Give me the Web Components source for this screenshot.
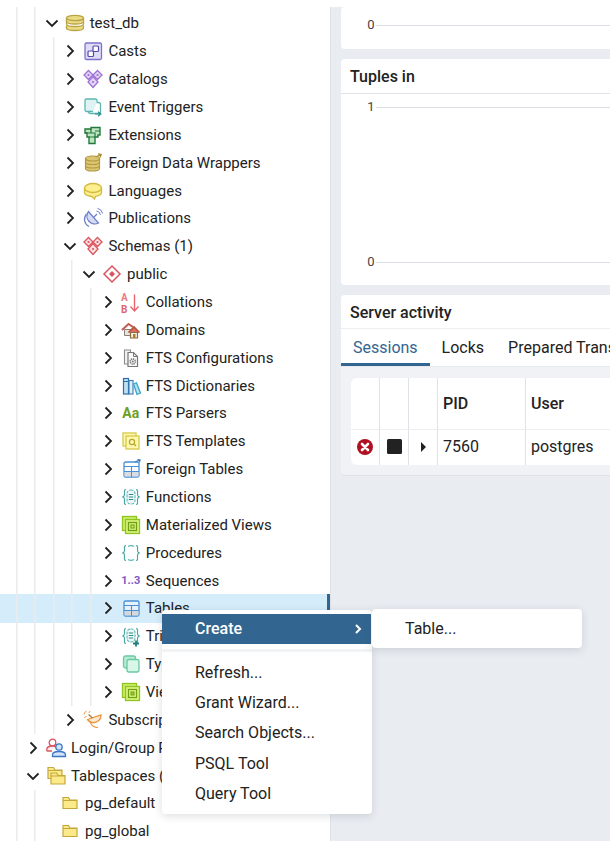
<!DOCTYPE html>
<html>
<head>
<meta charset="utf-8">
<style>
  html, body { margin: 0; padding: 0; height: 100%; background: #fff; overflow: hidden; }
  body { font-family: Roboto, "Liberation Sans", sans-serif; color: #222; }
</style>
</head>
<body>
<pg-app>
  <pg-tree slot="tree">
    <tree-row level="1" state="open" icon="database">test_db</tree-row>
    <tree-row level="2" icon="casts">Casts</tree-row>
    <tree-row level="2" icon="catalogs">Catalogs</tree-row>
    <tree-row level="2" icon="triggers">Event Triggers</tree-row>
    <tree-row level="2" icon="extensions">Extensions</tree-row>
    <tree-row level="2" icon="fdw">Foreign Data Wrappers</tree-row>
    <tree-row level="2" icon="languages">Languages</tree-row>
    <tree-row level="2" icon="publications">Publications</tree-row>
    <tree-row level="2" state="open" icon="schemas">Schemas (1)</tree-row>
    <tree-row level="3" state="open" icon="public">public</tree-row>
    <tree-row level="4" icon="collations">Collations</tree-row>
    <tree-row level="4" icon="domains">Domains</tree-row>
    <tree-row level="4" icon="ftsconf">FTS Configurations</tree-row>
    <tree-row level="4" icon="ftsdict">FTS Dictionaries</tree-row>
    <tree-row level="4" icon="ftsparser">FTS Parsers</tree-row>
    <tree-row level="4" icon="ftstemplate">FTS Templates</tree-row>
    <tree-row level="4" icon="foreign">Foreign Tables</tree-row>
    <tree-row level="4" icon="functions">Functions</tree-row>
    <tree-row level="4" icon="matviews">Materialized Views</tree-row>
    <tree-row level="4" icon="procedures">Procedures</tree-row>
    <tree-row level="4" icon="sequences">Sequences</tree-row>
    <tree-row level="4" icon="tables" selected>Tables</tree-row>
    <tree-row level="4" icon="trigfuncs">Trigger Functions</tree-row>
    <tree-row level="4" icon="types">Types</tree-row>
    <tree-row level="4" icon="views">Views</tree-row>
    <tree-row level="2" icon="subscriptions">Subscriptions</tree-row>
    <tree-row level="0" icon="roles">Login/Group Roles</tree-row>
    <tree-row level="0" state="open" icon="tablespaces">Tablespaces (2)</tree-row>
    <tree-row level="0" state="leaf" guides="2" icon="folder">pg_default</tree-row>
    <tree-row level="0" state="leaf" guides="2" icon="folder">pg_global</tree-row>
  </pg-tree>

  <pg-dash slot="dash">
    <chart-card style="--h:42px;--pad-top:10px;--pad-bottom:0px"><chart-axis>0</chart-axis></chart-card>
    <chart-card style="--h:226px;--pad-top:5px;--pad-bottom:15px" heading="Tuples in">
      <chart-axis>1</chart-axis>
      <chart-axis>0</chart-axis>
    </chart-card>
    <activity-card></activity-card>
  </pg-dash>

  <context-menu slot="overlay"></context-menu>
</pg-app>

<script>
const table = (stroke, fill, head) => `
  <rect x="3" y="3" width="15" height="15" rx="1.5" fill="${fill}" stroke="${stroke}" stroke-width="1.3"/>
  <path d="M3 7.500h15M3 12.500h15M10.500 7.500v10.500" stroke="${stroke}" stroke-width="1.1" fill="none"/>
  <rect x="3.600" y="13" width="6.400" height="4.500" fill="${head}"/><rect x="11" y="13" width="6.400" height="4.500" fill="${head}"/>`;

const gems = (stroke, fill) => `
  <g fill="${fill}" stroke="${stroke}" stroke-width="1.3">
    <path d="M5.500 1.500 10 6 5.500 10.500 1 6Z"/><path d="M14.500 1.500 19 6 14.500 10.500 10 6Z"/><path d="M10 7.500 15 13 10 18.500 5 13Z"/>
  </g>
  <g fill="${stroke}"><circle cx="5.500" cy="6" r="1.100"/><circle cx="14.500" cy="6" r="1.100"/><circle cx="10" cy="13" r="1.100"/></g>`;

const nested = (stroke, fill) => `
  <rect x="2" y="2" width="13" height="13" fill="${fill}" stroke="${stroke}" stroke-width="1.3"/>
  <rect x="5" y="5" width="13" height="13" fill="${fill}" stroke="${stroke}" stroke-width="1.3"/>`;

const braces = (c) => `
  <path d="M5 2.500C3 2.500 3.500 4.500 3.500 7S3.500 9 1.800 10C3.500 11 3.500 11 3.500 13.500S3 17.500 5 17.500" fill="none" stroke="${c}" stroke-width="1.200"/>
  <path d="M15 2.500C17 2.500 16.500 4.500 16.500 7S16.500 9 18.200 10C16.500 11 16.500 11 16.500 13.500S17 17.500 15 17.500" fill="none" stroke="${c}" stroke-width="1.200"/>`;

const cyl = (s, f) => `
  <g fill="${f}" stroke="${s}" stroke-width="1.200">
    <path d="M2.500 13v2.500c0 1.500 3.200 2.500 7 2.500s7-1 7-2.500V13"/>
    <path d="M2.500 9v3.500c0 1.500 3.200 2.500 7 2.500s7-1 7-2.500V9"/>
    <path d="M2.500 5.500V9c0 1.500 3.200 2.500 7 2.500s7-1 7-2.500V5.500"/>
    <ellipse cx="9.500" cy="5.500" rx="7" ry="2.500"/>
  </g>`;

const folder = (x, y) => `<path d="M${x} ${y}v11h14V${y + 2.500}h-7l-1.500-2.500Z" fill="#fbe98a" stroke="#c4a93a" stroke-width="1.200"/><path d="M${x} ${y + 3}h14" stroke="#c4a93a" stroke-width="1"/>`;

const icons = {
  database: `<g fill="#e9dc84" stroke="#b9a345" stroke-width="1.300">
      <path d="M1.500 12.500v2.500c0 1.500 3.500 2.500 8.500 2.500s8.500-1 8.500-2.500v-2.500"/>
      <path d="M1.500 8v3c0 1.500 3.500 2.500 8.500 2.500s8.500-1 8.500-2.500V8" fill="#fff"/>
      <path d="M1.500 5v3.500c0 1.500 3.500 2.500 8.500 2.500s8.500-1 8.500-2.500V5"/>
      <ellipse cx="10" cy="5" rx="8.500" ry="2.700"/></g>`,
  casts: `<rect x="2" y="2" width="16.500" height="16.500" rx="1.500" fill="#dfdcf7" stroke="#7d72c8" stroke-width="1.300"/>
      <rect x="5" y="10" width="5.500" height="5.500" rx="1" fill="#fff" stroke="#554aa8" stroke-width="1.200"/>
      <rect x="10" y="5" width="5.500" height="5.500" rx="1" fill="#fff" stroke="#554aa8" stroke-width="1.200"/>`,
  catalogs: gems('#9d72d6', '#e3d4f5'),
  triggers: `<rect x="5.500" y="5.500" width="12" height="11" rx="2" fill="#fff" stroke="#5cb7b3" stroke-width="1.300"/>
      <path d="M10 14.500H3.500a1.500 1.500 0 0 1-1.500-1.500V3.500A1.500 1.500 0 0 1 3.500 2h9A1.500 1.500 0 0 1 14 3.500V5.500" fill="#dff3f2" stroke="#5cb7b3" stroke-width="1.300"/>
      <path d="M12 17h5M15 14.800l2.800 2.200-2.800 2.200" fill="none" stroke="#2a8f8c" stroke-width="1.200"/>`,
  extensions: `<path d="M2 4h6V2.500h9V10h-2v2h-3v6.500H6V12H4V8H2Z" fill="#bfe6c2" stroke="#24793a" stroke-width="1.400"/>
      <path d="M2 8h10v4M8 4v4M6 12h6M12 6h5" fill="none" stroke="#24793a" stroke-width="1.200"/>`,
  fdw: cyl('#b29a3e', '#dcc676') + `<path d="M12.500 4 18 1.500M15 .8l3.200.6-1.200 3" fill="none" stroke="#a98f36" stroke-width="1.300"/>`,
  languages: `<path d="M1.500 7c0-2.500 3.800-4.500 8.500-4.500s8.500 2 8.500 4.500v4.500c0 1.800-2.500 3.300-6 3.800l-1 2.700-2.500-2.500C4.500 15 1.500 13.500 1.500 11.500Z" fill="#fdee8e" stroke="#d2b93f" stroke-width="1.300"/>
      <path d="M1.500 7c0 2.500 3.800 4.500 8.500 4.500s8.500-2 8.500-4.500" fill="none" stroke="#d2b93f" stroke-width="1.300"/>`,
  publications: `<path d="M5.500 3.500A7.800 7.800 0 0 0 15.500 15Z" fill="#d5dbf5" stroke="#6f80c8" stroke-width="1.300"/>
      <path d="M3.500 6a8 8 0 0 0 2.500 12.500" fill="none" stroke="#6f80c8" stroke-width="1.200"/>
      <path d="M10.500 9.500 14 6" stroke="#6f80c8" stroke-width="1.200"/>
      <path d="M13.500 3a4.500 4.500 0 0 1 4 4M14.500 .3a7 7 0 0 1 5.200 5.200" fill="none" stroke="#6f80c8" stroke-width="1"/>`,
  schemas: gems('#d9535f', '#fbdfe1'),
  public: `<path d="M10 2 18 10 10 18 2 10Z" fill="#fff" stroke="#d9535f" stroke-width="1.500"/><path d="M10 7 13 10 10 13 7 10Z" fill="#d9535f"/>`,
  collations: `<text x="0" y="8.500" font-family="Roboto" font-weight="700" font-size="10" fill="#e87b83">A</text>
      <text x="0" y="20.500" font-family="Roboto" font-weight="700" font-size="10" fill="#e06570">B</text>
      <path d="M13.500 2.500v16M9.500 14.500l4 4.500 4-4.500" fill="none" stroke="#e8636e" stroke-width="1.400"/>`,
  domains: `<path d="M1 10 7.500 4 12 7" fill="none" stroke="#c25c50" stroke-width="2"/>
      <path d="M3.500 9.500h7v6h-7Z" fill="#e7e2dc" stroke="#8a8378" stroke-width="1"/>
      <path d="M7.500 12.500 13 7l5.500 5.500" fill="#d9705f" stroke="#b9513f" stroke-width="1.600"/>
      <path d="M9.500 12.500h7v5.500h-7Z" fill="#f4efe6" stroke="#8a6e3e" stroke-width="1.200"/><rect x="12" y="14" width="2.500" height="4" fill="#b08030"/>`,
  ftsconf: `<path d="M3.500 2h6v14h-6Z" fill="#f3f3f3" stroke="#8c8c8c" stroke-width="1.100"/>
      <path d="M7 4.500h5.500l4 4V18.500H7Z" fill="#fafafa" stroke="#777" stroke-width="1.200"/><path d="M12.500 4.500v4h4" fill="none" stroke="#777"/>
      <circle cx="11.800" cy="13.500" r="2.600" fill="none" stroke="#777" stroke-width="1.500" stroke-dasharray="1.300 .7"/><circle cx="11.800" cy="13.500" r="1" fill="#777"/>`,
  ftsdict: `<rect x="2.500" y="2.500" width="5" height="15.500" fill="#bfe0ef" stroke="#2f6ea8" stroke-width="1.200"/>
      <path d="M2.500 5.500h5" stroke="#2f6ea8"/>
      <rect x="8" y="4.500" width="4" height="13.500" fill="#dff1f8" stroke="#3d7bb5" stroke-width="1.100"/>
      <path d="M12.500 8 15.500 6.800 19.500 17 16 18.500Z" fill="#aee3ef" stroke="#3aa0c5" stroke-width="1.200"/>`,
  ftstemplate: nested('#d6c94a', '#fdf7b0') + `<circle cx="11" cy="11" r="2.600" fill="none" stroke="#b5a72a" stroke-width="1.200"/><path d="M13 13l2 2" stroke="#b5a72a" stroke-width="1.200"/>`,
  foreign: table('#4a90d9', '#fff', '#d9dde2') + `<path d="M14 3 19 .8M16.500 .5l2.700.4-.8 2.500" fill="none" stroke="#3d7bb5" stroke-width="1.100"/>`,
  functions: braces('#4ba8a8') + `<rect x="6" y="3" width="8" height="14" rx="3.500" fill="#eef8f8" stroke="#5cb7b3" stroke-width="1.100" stroke-dasharray="3 1"/><path d="M7.800 7.500h4.400M7.800 10h4.400M7.800 12.500h4.400" stroke="#2e8c8c" stroke-width="1.100"/>`,
  matviews: `<rect x="1.500" y="1.500" width="14" height="14" fill="#cdee6a" stroke="#8fc31f" stroke-width="1.300"/><rect x="4.500" y="4.500" width="14" height="14" fill="#d8f27e" stroke="#8fc31f" stroke-width="1.300"/>
      <rect x="7.500" y="7.500" width="8" height="8" fill="none" stroke="#6f9f12" stroke-width="1.300"/><rect x="10" y="10" width="3" height="3" fill="none" stroke="#6f9f12" stroke-width="1.100"/>`,
  procedures: braces('#4ba8a8') + `<path d="M7 3.500A6 6 0 0 1 13 3.500M7 16.500A6 6 0 0 0 13 16.500" fill="none" stroke="#5cb7b3" stroke-width="1.100"/>`,
  tables: table('#4a8fd6', '#e6f2fb', '#d5d9de'),
  trigfuncs: braces('#4ba8a8') + `<rect x="6" y="3" width="8" height="13" rx="3.500" fill="#eef8f8" stroke="#5cb7b3" stroke-width="1.100" stroke-dasharray="3 1"/><path d="M7.800 7h4.400M7.800 9.500h4.400M7.800 12h4.400" stroke="#2e8c8c" stroke-width="1.100"/><path d="M12 17.500h6M15 14.500v6" stroke="#237f7c" stroke-width="1.800"/>`,
  types: `<rect x="2.500" y="2" width="12" height="12" rx="2" fill="#b5ecd3" stroke="#6ac9a0" stroke-width="1.300"/><rect x="6" y="5.500" width="12" height="12.500" rx="2" fill="#d9f7e9" stroke="#6ac9a0" stroke-width="1.300"/>`,
  views: `<rect x="1.500" y="1.500" width="14" height="14" fill="#cdee6a" stroke="#8fc31f" stroke-width="1.300"/><rect x="4.500" y="4.500" width="14" height="14" fill="#d8f27e" stroke="#8fc31f" stroke-width="1.300"/>
      <rect x="7.500" y="7.500" width="8" height="8" fill="none" stroke="#6f9f12" stroke-width="1.200"/><rect x="10" y="10" width="3" height="3" fill="#a8cc30" stroke="#6f9f12"/>`,
  subscriptions: `<path d="M4.500 9.500A7.500 7.500 0 0 0 18 5Z" fill="#fde9d0" stroke="#e89640" stroke-width="1.300"/>
      <path d="M7 11.500a8 8 0 0 0 8 6" fill="none" stroke="#e89640" stroke-width="1.200"/>
      <path d="M5.500 4.500 9.500 8" stroke="#a8763a" stroke-width="1.200"/>
      <path d="M1 4.500A4.500 4.500 0 0 1 3.500 1M3.500 6.500 1.200 7.500M6 3 7 1" fill="none" stroke="#e89640" stroke-width="1"/>`,
  roles: `<circle cx="6.500" cy="4.500" r="3.300" fill="#fff" stroke="#d9535f" stroke-width="1.300"/><path d="M.8 13v-1.500c0-2 2.300-3.500 5.700-3.500 1.600 0 3 .3 4 1M.8 13H6" fill="#fde8e8" stroke="#d9535f" stroke-width="1.300"/>
      <circle cx="13" cy="9" r="3.200" fill="#cfe3fa" stroke="#3d76c0" stroke-width="1.300"/><path d="M6.500 18.500v-1.500c0-2 2.500-3.500 6.500-3.500s6.500 1.500 6.500 3.500v1.500Z" fill="#cfe3fa" stroke="#3d76c0" stroke-width="1.300"/>`,
  tablespaces: folder(2, 1.500) + folder(5, 7),
  folder: folder(3, 4.500),
};

customElements.define('pg-icon', class extends HTMLElement {
  constructor() {
    super();
    this.attachShadow({ mode: 'open' });
  }
  connectedCallback() {
    const name = this.getAttribute('name');
    let inner;
    if (name === 'ftsparser') {
      inner = `<span class="aa">Aa</span>`;
    } else if (name === 'sequences') {
      inner = `<span class="seq">1..3</span>`;
    } else {
      inner = `<svg viewBox="0 0 20 20" width="20" height="20">${icons[name] || ''}</svg>`;
    }
    this.shadowRoot.innerHTML = `
      <style>
        :host { display: flex; width: 20px; height: 20px; align-items: center; justify-content: center; flex: none; }
        svg { display: block; overflow: visible; }
        .aa { font: 700 14px Roboto, sans-serif; color: #6e9e1e; }
        .seq { font: 700 11px Roboto, sans-serif; color: #7b5cc4; white-space: nowrap; }
      </style>
      ${inner}`;
  }
});

customElements.define('tree-row', class extends HTMLElement {
  constructor() {
    super();
    this.attachShadow({ mode: 'open' });
  }
  connectedCallback() {
    const level = +this.getAttribute('level');
    const state = this.getAttribute('state') || 'closed';
    const guides = +(this.getAttribute('guides') || level + 1);
    const lines = [];
    for (let i = 0; i < guides; i++) {
      lines.push(`linear-gradient(#e9ecef,#e9ecef) ${16 + i * 18.4}px 0/1.500px 100% no-repeat`);
    }
    const indent = state === 'leaf' ? 56 : 24 + level * 18.7;
    const arrow = state === 'open' ? 'M3.500 6.500 9 12l5.500-5.500' : 'M6.500 3.500 12 9l-5.500 5.500';
    const chev = state === 'leaf' ? '' :
      `<svg class="chev" viewBox="0 0 18 18" width="18" height="18"><path d="${arrow}" fill="none" stroke="#222" stroke-width="1.800"/></svg>`;
    this.shadowRoot.innerHTML = `
      <style>
        :host { display: flex; align-items: center; height: 27.870px; box-sizing: border-box; white-space: nowrap;
                font-size: 15px; color: #222; padding-left: ${indent}px; background: ${lines.join(',')}; }
        :host([selected]) { height: 29.870px; margin: -1px 0; padding-right: 4px; background-color: #d5edfb;
                            border-right: 3.500px solid #326690; }
        .chev { flex: none; }
        pg-icon { margin: 0 5px 0 4px; }
      </style>
      ${chev}<pg-icon name="${this.getAttribute('icon')}"></pg-icon><slot></slot>`;
  }
});

customElements.define('pg-tree', class extends HTMLElement {
  constructor() {
    super();
    this.attachShadow({ mode: 'open' }).innerHTML = `
      <style>
        :host { display: block; padding-top: 2.500px; height: 100%; box-sizing: border-box; overflow: hidden;
                background: linear-gradient(#e9ecef,#e9ecef) 16px 0/1.500px 3px no-repeat,
                            linear-gradient(#e9ecef,#e9ecef) 34.400px 0/1.500px 3px no-repeat; }
      </style>
      <slot></slot>`;
  }
});

customElements.define('chart-axis', class extends HTMLElement {
  constructor() {
    super();
    this.attachShadow({ mode: 'open' }).innerHTML = `
      <style>
        :host { display: flex; align-items: center; height: 16px; font-size: 13px; color: #444; padding-left: 25px; }
        .label { width: 10px; text-align: center; flex: none; position: relative; top: -1px; }
        .line { flex: 1; height: 1px; background: #dcdfe3; }
      </style>
      <span class="label"><slot></slot></span><span class="line"></span>`;
  }
});

customElements.define('chart-card', class extends HTMLElement {
  constructor() {
    super();
    this.attachShadow({ mode: 'open' }).innerHTML = `
      <style>
        :host { display: flex; flex-direction: column; height: var(--h); background: #fff; border-radius: 4px;
                box-sizing: border-box; flex: none; }
        .head { height: 35px; box-sizing: border-box; border-bottom: 1px solid #dfe2e6; padding: 0 9px;
                display: flex; align-items: center; font-size: 16px; font-weight: 500; color: #222; }
        .head:empty { display: none; }
        .body { flex: 1; display: flex; flex-direction: column; justify-content: space-between;
                padding: var(--pad-top) 0 var(--pad-bottom); }
      </style>
      <div class="head"></div>
      <div class="body"><slot></slot></div>`;
  }
  connectedCallback() {
    this.shadowRoot.querySelector('.head').textContent = this.getAttribute('heading') || '';
  }
});

customElements.define('activity-card', class extends HTMLElement {
  constructor() {
    super();
    this.attachShadow({ mode: 'open' }).innerHTML = `
      <style>
        :host { display: flex; flex-direction: column; background: #f0f2f5; border-radius: 4px; height: 181px;
                border-bottom: 1px solid #dfe2e6; box-sizing: border-box; flex: none; }
        .head { height: 34px; box-sizing: border-box; background: #fff; border-radius: 4px 4px 0 0; border-bottom: 1px solid #eceef1;
                padding: 1px 9px 0; display: flex; align-items: center; font-size: 16px; font-weight: 500; color: #222; }
        .tabs { display: flex; height: 38px; box-sizing: border-box; background: #fff; font-size: 16px; flex: none;
                border-bottom: 1px solid #e6e9ed; white-space: nowrap; }
        .tab { padding: 0 12px; display: flex; align-items: center; height: 37px; box-sizing: border-box; }
        .tab.on { color: #326690; border-bottom: 3px solid #326690; padding-top: 3px; }
        .wrap { padding: 11px 10px 0; }
        .grid { display: grid; grid-template-columns: 29px 29px 29px 88px 1fr; grid-template-rows: 52px 35px;
                background: #fff; border-radius: 6px; overflow: hidden; font-size: 16px; }
        .grid > div { display: flex; align-items: center; box-sizing: border-box; border-right: 1px solid #dfe2e6; padding: 0 0 2px 5px; }
        .grid > .h { border-bottom: 1px solid #eceef1; font-weight: 500; padding-bottom: 0; }
        .grid > .ic { justify-content: center; padding: 0 0 2px; }
        .grid > .last { border-right: 0; }
      </style>
      <div class="head">Server activity</div>
      <div class="tabs">
        <div class="tab on">Sessions</div><div class="tab">Locks</div><div class="tab">Prepared Transactions</div>
      </div>
      <div class="wrap"><div class="grid">
        <div class="h"></div><div class="h"></div><div class="h"></div><div class="h">PID</div><div class="h last">User</div>
        <div class="ic"><svg width="18" height="18" viewBox="0 0 18 18"><circle cx="9" cy="9" r="8" fill="#b0101f"/><path d="M6 6l6 6M12 6l-6 6" stroke="#fff" stroke-width="2.600" stroke-linecap="round"/></svg></div>
        <div class="ic"><svg width="15" height="15" viewBox="0 0 15 15"><rect width="15" height="15" rx="1.500" fill="#222"/></svg></div>
        <div class="ic"><svg width="7" height="10" viewBox="0 0 7 10"><path d="M1 0l5 5-5 5Z" fill="#222"/></svg></div>
        <div>7560</div><div class="last">postgres</div>
      </div></div>`;
  }
});

customElements.define('pg-dash', class extends HTMLElement {
  constructor() {
    super();
    this.attachShadow({ mode: 'open' }).innerHTML = `
      <style>
        :host { display: flex; flex-direction: column; gap: 10px; height: 100%; box-sizing: border-box; overflow: hidden;
                background: #e9edf2; border-left: 1px solid #dde1e6; padding-left: 10px; }
        ::slotted(*) { width: 320px; }
      </style>
      <slot></slot>`;
  }
});

customElements.define('context-menu', class extends HTMLElement {
  constructor() {
    super();
    this.attachShadow({ mode: 'open' }).innerHTML = `
      <style>
        :host { position: absolute; left: 162px; top: 610px; display: flex; align-items: flex-start; font-size: 16px; color: #222; }
        .menu { background: #fff; border-radius: 4px; box-shadow: 0 2px 8px rgba(60,70,90,.18); }
        .main { width: 210px; height: 204px; box-sizing: border-box; padding-top: 3.500px; display: flex; flex-direction: column; }
        .item { height: 30.300px; display: flex; align-items: center; padding-left: 33px; flex: none; }
        .create { height: 30.500px; background: #326690; color: #fff; font-weight: 500; justify-content: space-between; padding-right: 9px; margin-right: 1px; }
        .sep { height: 3px; background: #f1f3f5; margin: 5px 0 5px; flex: none; }
        .sub { width: 210px; height: 39px; display: flex; align-items: center; padding-left: 33px; box-sizing: border-box; margin-top: -1px; }
      </style>
      <div class="menu main">
        <div class="item create"><span>Create</span>
          <svg width="8" height="12" viewBox="0 0 8 12"><path d="M2 2l4 4-4 4" fill="none" stroke="#fff" stroke-width="2"/></svg></div>
        <div class="sep"></div>
        <div class="item">Refresh...</div>
        <div class="item">Grant Wizard...</div>
        <div class="item">Search Objects...</div>
        <div class="item">PSQL Tool</div>
        <div class="item">Query Tool</div>
      </div>
      <div class="menu sub">Table...</div>`;
  }
});

customElements.define('pg-app', class extends HTMLElement {
  constructor() {
    super();
    this.attachShadow({ mode: 'open' }).innerHTML = `
      <style>
        :host { display: block; height: 841px; width: 610px; overflow: hidden; box-sizing: border-box; padding-top: 7px; background: #fff; }
        .split { display: grid; grid-template-columns: 330px 280px; height: 834px; }
      </style>
      <div class="split"><slot name="tree"></slot><slot name="dash"></slot></div>
      <slot name="overlay"></slot>`;
  }
});
</script>
</body>
</html>
